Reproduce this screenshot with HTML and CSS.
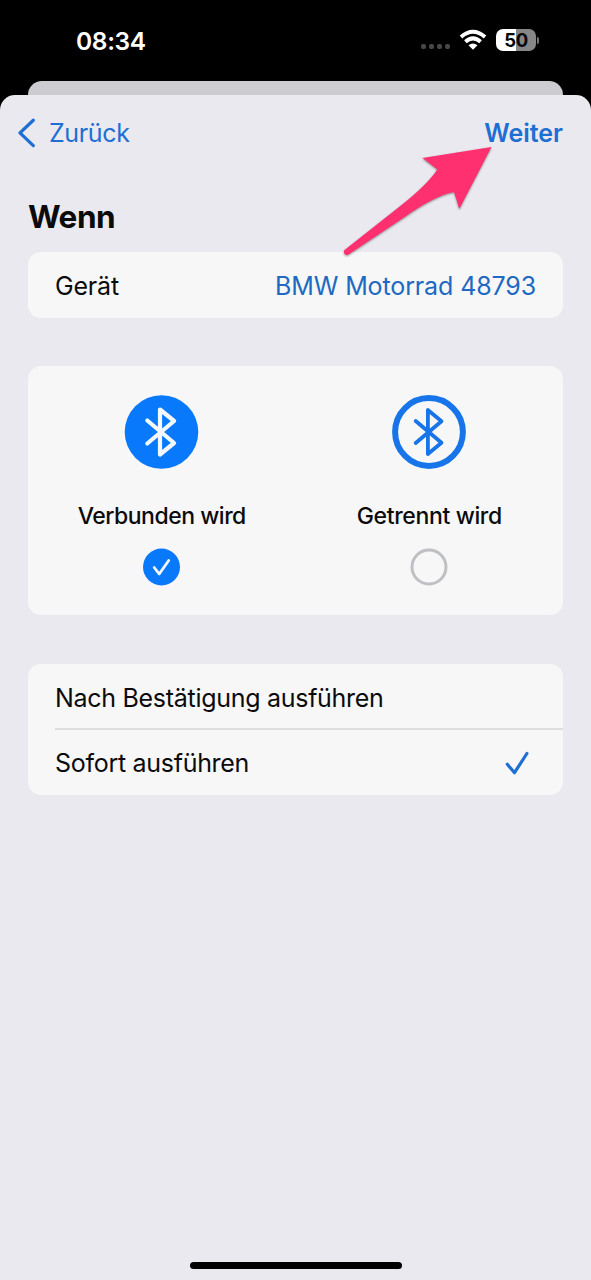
FILE: index.html
```html
<!DOCTYPE html>
<html lang="de">
<head>
<meta charset="utf-8">
<title>Automation</title>
<link rel="stylesheet" href="styles.css">
</head>
<body>
<div class="screen">
  <header class="status">
    <span class="time">08:34</span>
    <div class="indicators">
      <div class="dots"><i></i><i></i><i></i><i></i></div>
      <svg class="wifi" width="28" height="22" viewBox="0 0 28 22">
        <g fill="none" stroke="#fff" stroke-width="3.9">
          <path d="M2 8Q14-2.400 26 8"/>
          <path d="M6.400 12.700Q14 6 21.600 12.700"/>
        </g>
        <path fill="#fff" d="M9.500 16.300Q14 12.600 18.500 16.300L14 20.800Z"/>
      </svg>
      <div class="battery"><span class="level">50</span><i class="tip"></i></div>
    </div>
  </header>
  <div class="behind"></div>
  <main class="sheet">
    <nav class="nav">
      <a class="back">
        <svg width="20" height="32" viewBox="0 0 20 32"><path d="M17.300 3.200L4 15.900L17.300 28.600" fill="none" stroke="#1d6fd4" stroke-width="3.300" stroke-linecap="round" stroke-linejoin="round"/></svg>
        <span class="back-label">Zurück</span>
      </a>
      <a class="next">Weiter</a>
    </nav>
    <h1 class="title">Wenn</h1>
    <section class="card device">
      <span class="device-label">Gerät</span>
      <span class="device-value">BMW Motorrad 48793</span>
    </section>
    <section class="card events">
      <div class="event">
        <svg class="bt" width="76" height="76" viewBox="0 0 76 76">
          <circle cx="37.500" cy="38" r="36.800" fill="#0879fb"/>
          <path d="M23.300 26.500L50.100 49L36 60.500V15.500L50.100 27L23.300 49.500" fill="none" stroke="#f3f8ff" stroke-width="4.200" stroke-linecap="round" stroke-linejoin="round"/>
        </svg>
        <span class="event-name connected">Verbunden wird</span>
        <svg class="radio" width="38" height="38" viewBox="0 0 38 38">
          <circle cx="18.500" cy="19" r="18.500" fill="#0879fb"/>
          <path d="M11.200 19.500L16.200 26L25.700 12.500" fill="none" stroke="#f3f8ff" stroke-width="2.800" stroke-linecap="round" stroke-linejoin="round"/>
        </svg>
      </div>
      <div class="event">
        <svg class="bt" width="76" height="76" viewBox="0 0 76 76">
          <circle cx="38" cy="38" r="33.900" fill="none" stroke="#1775e9" stroke-width="6"/>
          <path d="M24.700 27L50.500 48.800L36.900 60V16L50.500 27.200L24.700 49" fill="none" stroke="#1775e9" stroke-width="3.800" stroke-linecap="round" stroke-linejoin="round"/>
        </svg>
        <span class="event-name disconnected">Getrennt wird</span>
        <svg class="radio" width="38" height="38" viewBox="0 0 38 38">
          <circle cx="19" cy="19" r="17" fill="none" stroke="#bfc0c4" stroke-width="3"/>
        </svg>
      </div>
    </section>
    <section class="card modes">
      <div class="mode"><span class="mode-confirm">Nach Bestätigung ausführen</span></div>
      <div class="mode selected">
        <span class="mode-now">Sofort ausführen</span>
        <svg width="26" height="26" viewBox="0 0 26 26"><path d="M3.300 14.300L10.500 22.700L22.900 3.500" fill="none" stroke="#1f70d3" stroke-width="3.200" stroke-linecap="round" stroke-linejoin="round"/></svg>
      </div>
    </section>
    <div class="home"></div>
  </main>
  <svg class="arrow" width="170" height="120" viewBox="335 140 170 120">
    <path d="M491.500 147L422.500 158L437.300 169.400Q428 184 399 207L345.500 249.300A3 3 0 0 0 348.500 254.500L404 217.500Q434 196 454 192L459.300 209Z" fill="#ff3070"/>
  </svg>
</div>
</body>
</html>
```

FILE: styles.css
```css
* { box-sizing: border-box; }
body {
  margin: 0;
  background: #000;
  color: #0b0b0c;
  font-family: Inter, "Liberation Sans", sans-serif;
  font-size: 25px;
  line-height: 32px;
}
.screen {
  position: relative;
  display: flex;
  flex-direction: column;
  width: 591px;
  height: 1280px;
  overflow: hidden;
}
.screen svg { display: block; flex: none; }
.screen span, .next { white-space: nowrap; }

.status {
  display: flex;
  justify-content: space-between;
  align-items: center;
  height: 81px;
  padding: 0 55px 2px 76px;
  color: #fff;
}
.time { padding-top: 2px; font-size: 24.500px; font-weight: 600; letter-spacing: -0.35px; }
.indicators { display: flex; align-items: center; }
.dots { display: flex; gap: 3px; margin: 13px 9px 0 0; }
.dots i { width: 5px; height: 5px; border-radius: 2px; background: #48484a; }
.battery {
  position: relative;
  width: 40px;
  height: 22px;
  margin-left: 9px;
  border-radius: 7px;
  background: linear-gradient(90deg, #fff 50%, #868686 50%);
  color: #080808;
  font-size: 18.500px;
  font-weight: 700;
  letter-spacing: -0.4px;
  line-height: 22px;
  text-align: center;
}
.tip {
  position: absolute;
  left: 41px;
  top: 8px;
  width: 2px;
  height: 7px;
  border-radius: 0 3px 3px 0;
  background: #777;
}

.behind {
  height: 14px;
  margin: 0 28px;
  border-radius: 14px 14px 0 0;
  background: #cdccd1;
}
.sheet {
  display: flex;
  flex: 1;
  flex-direction: column;
  border-radius: 15px 15px 0 0;
  background: #eae9ef;
}
.nav {
  display: flex;
  justify-content: space-between;
  height: 76px;
  padding: 22px 28px 0 16px;
  color: #1d6fd4;
}
.back { display: flex; height: 32px; gap: 13px; letter-spacing: -0.35px; }
.next { font-weight: 600; }
.title {
  margin: 28px 28px 0;
  font-size: 31.500px;
  line-height: 36px;
  font-weight: 700;
  letter-spacing: -0.5px;
}
.card {
  margin: 0 28px;
  border-radius: 13px;
  background: #f7f7f8;
}
.device {
  display: flex;
  justify-content: space-between;
  align-items: center;
  height: 66px;
  margin-top: 17px;
  padding: 2px 27px 0 27px;
}
.device-label { letter-spacing: -0.2px; }
.device-value { color: #2069c2; letter-spacing: -0.12px; }
.events {
  display: grid;
  grid-template-columns: 1fr 1fr;
  height: 249px;
  margin-top: 48px;
  padding-top: 28px;
}
.event { display: flex; flex-direction: column; align-items: center; }
.event-name { margin-top: 30px; font-size: 23px; font-weight: 500; }
.connected { letter-spacing: -0.48px; }
.disconnected { letter-spacing: -0.35px; }
.radio { margin-top: 16px; }
.modes { margin-top: 49px; height: 131px; }
.mode {
  display: flex;
  justify-content: space-between;
  align-items: center;
  height: 66px;
  margin-left: 27px;
  padding-right: 33px;
  letter-spacing: -0.29px;
}
.mode:first-child { padding-top: 3px; border-bottom: 2px solid #dededf; }
.home {
  width: 212px;
  height: 7px;
  margin: auto auto 11px;
  border-radius: 4px;
  background: #000;
}
.arrow {
  position: absolute;
  left: 335px;
  top: 140px;
  filter: drop-shadow(0 1.500px 1.200px rgba(0, 0, 0, 0.4));
}
```
